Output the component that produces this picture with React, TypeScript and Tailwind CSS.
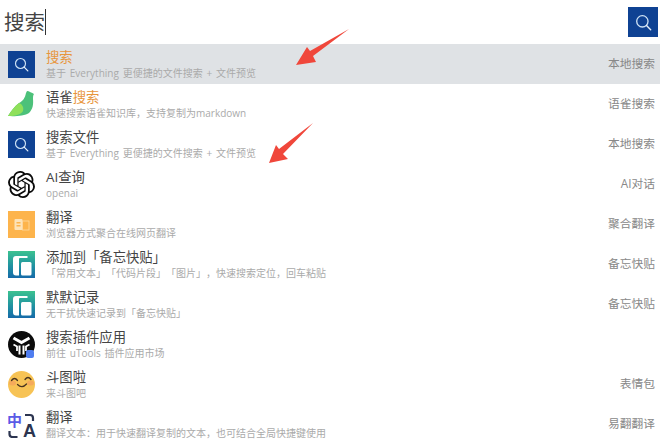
import { ReactNode } from 'react'
import { SiOpenai } from 'react-icons/si'

interface Row {
  title: ReactNode
  sub: string
  tag: string
  icon: ReactNode
  active?: boolean
}

const Hl = ({ children }: { children: ReactNode }) => <span className="text-[#e8953c]">{children}</span>

const SearchGlass = ({ size = 18 }: { size?: number }) => (
  <svg width={size} height={size} viewBox="0 0 18 18" fill="none" className="block">
    <circle cx="7.8" cy="7.8" r="6" stroke="#cfe3f5" strokeWidth="1.4" />
    <path d="M12.2 12.2L16.6 16.6" stroke="#e6eff8" strokeWidth="1.5" strokeLinecap="round" />
  </svg>
)

const SearchIcon = () => (
  <div className="flex h-[27px] w-[27px] items-center justify-center bg-[#0f4293]">
    <SearchGlass size={15} />
  </div>
)

const YuqueIcon = () => (
  <svg width="27" height="27" viewBox="0 0 27 27" className="block">
    <path d="M18 2L19 0C21 0 24 2 26 3C25 4 25 6 25 8C25.5 13 25 18 21 22C17 25 6 25.500 0 25C3 20 7 15 11 12C15 10 17 7 18 2z" fill="#4cc17a" />
    <path d="M0 25C3 20 7 15 11 12C14 13 16 16 15 20C13 24 5 25.500 0 25z" fill="#8fe05a" />
  </svg>
)

const TranslateDocIcon = () => (
  <div className="flex h-[27px] w-[27px] items-center justify-center bg-[#fdb44c]">
    <svg width="16" height="13" viewBox="0 0 16 13" className="block">
      <rect x="0.500" y="1" width="8" height="11" rx="1" fill="#fde3b8" />
      <rect x="8.500" y="3" width="6.500" height="9" fill="none" stroke="#fdd9a3" strokeWidth="0.800" />
      <rect x="2.500" y="4" width="4" height="1.500" fill="#fdb44c" />
      <rect x="2.500" y="7" width="4" height="1.500" fill="#fdb44c" />
    </svg>
  </div>
)

const ClipIcon = () => (
  <div className="h-[27px] w-[27px] bg-gradient-to-b from-[#3cc28f] to-[#1769a8]">
    <svg width="27" height="27" viewBox="0 0 27 27" className="block">
      <path d="M8 5h11.500v2H12a1 1 0 0 0 -1 1v16.500H8a3 3 0 0 1 -3 -3V8a3 3 0 0 1 3 -3z" fill="#fff" />
      <rect x="13" y="11" width="10.500" height="13.500" rx="1.500" fill="#fff" />
    </svg>
  </div>
)

const UToolsIcon = () => (
  <div className="relative h-[27px] w-[27px]">
    <svg width="27" height="27" viewBox="0 0 27 27" className="block">
      <circle cx="13.500" cy="13.500" r="13.500" fill="#0b0b0b" />
      <path d="M5.500 7l8 4.500 8 -4.500" stroke="#fff" strokeWidth="3" fill="none" />
      <path d="M11.500 14.500v9M15.500 14.500v9" stroke="#fff" strokeWidth="2" fill="none" />
      <path d="M5.500 13.500l3.500 2v4.500M21.500 13.500l-3.500 2v4.500" stroke="#fff" strokeWidth="1.800" fill="none" />
    </svg>
    <span className="absolute bottom-0 right-[1px] h-[8px] w-[8px] rounded-[2px] bg-[#4f7df0]" />
  </div>
)

const SmileIcon = () => (
  <svg width="27" height="27" viewBox="0 0 27 27" className="block">
    <circle cx="13.500" cy="13.500" r="13.500" fill="#f7c355" />
    <ellipse cx="4.500" cy="12" rx="3.500" ry="2.500" fill="#f4a05e" opacity="0.700" />
    <ellipse cx="22.500" cy="12" rx="3.500" ry="2.500" fill="#f4a05e" opacity="0.700" />
    <path d="M3.500 9.500q3 -4 6 0M17 8.500q3 -4 6 0" stroke="#4a3520" strokeWidth="1.300" fill="none" strokeLinecap="round" />
    <path d="M9.500 13.500q4.500 4.500 9 -.5" stroke="#4a3520" strokeWidth="1.300" fill="none" strokeLinecap="round" />
  </svg>
)

const YiTranslateIcon = () => (
  <div className="relative h-[27px] w-[27px]">
    <span className="absolute left-[-1px] top-0 font-['Noto_Sans_CJK_SC',sans-serif] text-[15px] font-bold leading-[18px] text-[#5b5be6]">中</span>
    <span className="absolute bottom-[-3px] right-[-1px] font-['Liberation_Sans',sans-serif] text-[18px] font-bold leading-[20px] text-[#2c3550]">A</span>
    <svg width="27" height="27" viewBox="0 0 27 27" className="absolute left-0 top-0">
      <path d="M17 4h5a3 3 0 0 1 3 3v3" stroke="#2c3550" strokeWidth="2.200" fill="none" />
      <path d="M1.500 20v3a3 3 0 0 0 3 3h5" stroke="#2c3550" strokeWidth="2.200" fill="none" />
    </svg>
  </div>
)

const rows: Row[] = [
  { title: <Hl>搜索</Hl>, sub: '基于 Everything 更便捷的文件搜索 + 文件预览', tag: '本地搜索', icon: <SearchIcon />, active: true },
  { title: <>语雀<Hl>搜索</Hl></>, sub: '快速搜索语雀知识库，支持复制为markdown', tag: '语雀搜索', icon: <YuqueIcon /> },
  { title: '搜索文件', sub: '基于 Everything 更便捷的文件搜索 + 文件预览', tag: '本地搜索', icon: <SearchIcon /> },
  { title: 'AI查询', sub: 'openai', tag: 'AI对话', icon: <SiOpenai size={27} color="#0b0b0b" /> },
  { title: '翻译', sub: '浏览器方式聚合在线网页翻译', tag: '聚合翻译', icon: <TranslateDocIcon /> },
  { title: '添加到「备忘快贴」', sub: '「常用文本」「代码片段」「图片」，快速搜索定位，回车粘贴', tag: '备忘快贴', icon: <ClipIcon /> },
  { title: '默默记录', sub: '无干扰快速记录到「备忘快贴」', tag: '备忘快贴', icon: <ClipIcon /> },
  { title: '搜索插件应用', sub: '前往 uTools 插件应用市场', tag: '', icon: <UToolsIcon /> },
  { title: '斗图啦', sub: '来斗图吧', tag: '表情包', icon: <SmileIcon /> },
  { title: '翻译', sub: '翻译文本：用于快速翻译复制的文本，也可结合全局快捷键使用', tag: '易翻翻译', icon: <YiTranslateIcon /> },
]

const Arrow = ({ className, points }: { className: string; points: string }) => (
  <svg width="60" height="46" viewBox="0 0 60 46" className={className}>
    <polygon points={points} fill="#f0473b" />
  </svg>
)

export default function App() {
  return (
    <div className="relative h-[444px] w-[660px] overflow-hidden bg-white font-['Open_Sans','Noto_Sans_CJK_SC',sans-serif] [text-spacing-trim:space-all]">
      <div className="flex h-[44px] items-center justify-between pl-[4px] pr-[2px]">
        <div className="flex items-center">
          <span className="text-[20.500px] leading-[30px] text-[#444]">搜索</span>
          <span className="h-[26px] w-px bg-[#333]" />
        </div>
        <div className="flex h-[30px] w-[30px] items-center justify-center bg-[#0f4293]">
          <SearchGlass size={17} />
        </div>
      </div>

      {rows.map((row, i) => (
        <div key={i} className={`flex h-[40px] items-center pl-[8px] pr-[5px] ${row.active ? 'bg-[#dfe2e5]' : 'bg-white'}`}>
          <div className="flex h-[27px] w-[27px] shrink-0 items-center justify-center">{row.icon}</div>
          <div className="ml-[11px] mb-[1px] min-w-0 flex-1">
            <div className="text-[13.333px] leading-[20px] text-[#444]">{row.title}</div>
            <div className="mt-[-1px] text-[10px] leading-[14px] text-[#aaa] [word-spacing:1.200px]">{row.sub}</div>
          </div>
          <div className="shrink-0 text-[11.750px] text-[#888]">{row.tag}</div>
        </div>
      ))}

      <Arrow className="absolute left-[292px] top-[26px]" points="57,3 21,30 24,36 4,39 15,21 18,25" />
      <Arrow className="absolute left-[265px] top-[120px]" points="48,3 18,34 23,39 4,43 11,25 14,29" />
    </div>
  )
}
